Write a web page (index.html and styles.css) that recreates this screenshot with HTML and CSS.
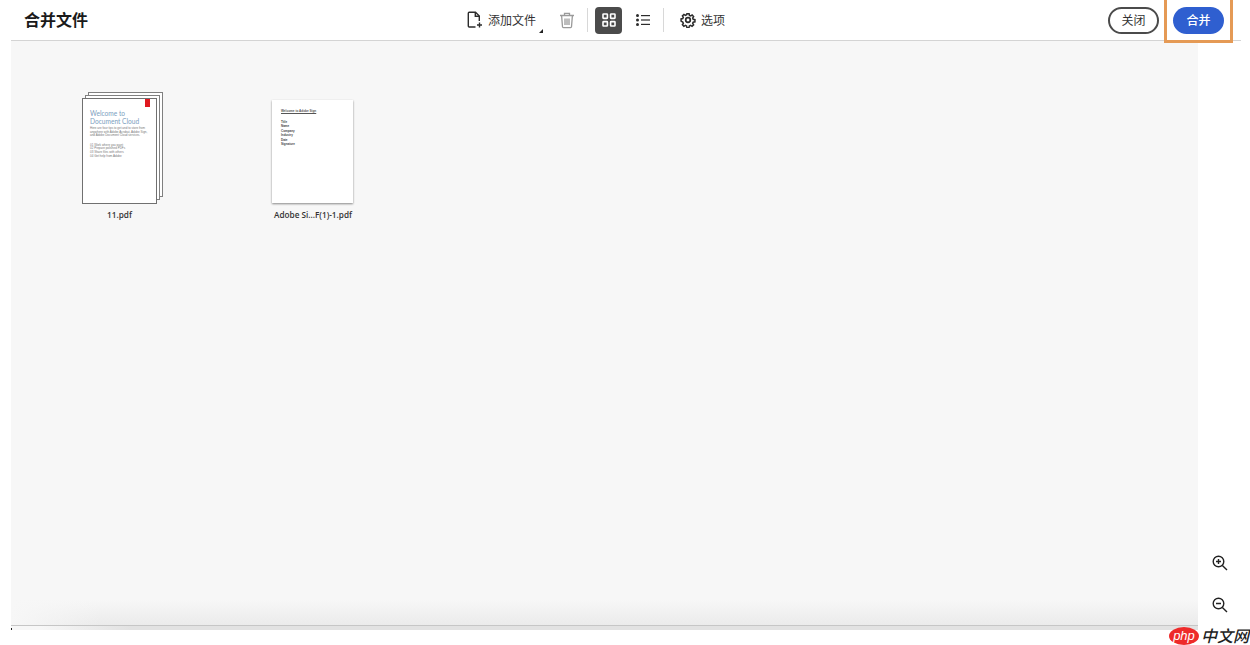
FILE: index.html
```html
<!DOCTYPE html>
<html lang="zh">
<head>
<meta charset="utf-8">
<title>合并文件</title>
<link rel="stylesheet" href="styles.css">
</head>
<body>
<div class="app">
  <header class="topbar">
    <h1 class="title">合并文件</h1>
    <div class="tools">
      <button class="tool add">
        <svg class="ic" width="18" height="18" viewBox="0 0 18 18" fill="none" stroke="#2c2c2c" stroke-width="1.4"><path d="M9.5 16H3.2a.9.9 0 0 1-.9-.9V2.2a.9.9 0 0 1 .9-.9h6.3l3.8 3.8V10"/><path d="M9.3 1.4v3.9h3.9"/><path d="M13.5 11.5v5M11 14h5"/></svg>
        <span>添加文件</span>
        <i class="corner"></i>
      </button>
      <svg class="trash" width="16" height="17" viewBox="0 0 16 17" fill="none" stroke="#9a9a9a" stroke-width="1.3"><path d="M1 3.5h14M5.5 3.3V1.4h5v1.9M2.6 3.6l.9 11.2a1 1 0 0 0 1 .9h7a1 1 0 0 0 1-.9l.9-11.2M6 6.5v6.5M8 6.5v6.5M10 6.5v6.5"/></svg>
      <i class="sep first"></i>
      <span class="view on">
        <svg width="14" height="14" viewBox="0 0 14 14" fill="none" stroke="#fff" stroke-width="1.6"><rect x="1" y="1" width="4.4" height="4.4" rx=".6"/><rect x="8.6" y="1" width="4.4" height="4.4" rx=".6"/><rect x="1" y="8.6" width="4.4" height="4.4" rx=".6"/><rect x="8.6" y="8.6" width="4.4" height="4.4" rx=".6"/></svg>
      </span>
      <span class="view">
        <svg width="14" height="12" viewBox="0 0 14 12" fill="#2c2c2c"><circle cx="1.5" cy="1.6" r="1.5"/><circle cx="1.5" cy="6" r="1.5"/><circle cx="1.5" cy="10.4" r="1.5"/><rect x="5" y="1" width="9" height="1.2"/><rect x="5" y="5.4" width="9" height="1.2"/><rect x="5" y="9.8" width="9" height="1.2"/></svg>
      </span>
      <i class="sep second"></i>
      <button class="tool opts">
        <svg class="ic" width="16" height="16" viewBox="0 0 16 16" fill="none" stroke="#2c2c2c" stroke-width="1.7"><circle cx="8" cy="8" r="2.3"/><path d="M6.8 1h2.4l.4 1.9 1.3.6 1.7-1 1.6 1.7-1 1.6.6 1.4 1.9.4v2.4l-1.9.4-.6 1.3 1 1.7-1.7 1.6-1.6-1-1.4.6-.4 1.9H6.8l-.4-1.9-1.3-.6-1.7 1-1.6-1.7 1-1.6-.6-1.4L.3 9.2V6.8l1.9-.4.6-1.3-1-1.7 1.7-1.6 1.6 1 1.4-.6z" transform="translate(.8 .8) scale(.9)"/></svg>
        <span>选项</span>
      </button>
    </div>
    <div class="actions">
      <button class="btn close">关闭</button>
      <button class="btn merge">合并</button>
    </div>
  </header>
  <div class="body">
    <main class="stage">
      <div class="files">
        <figure class="file stacked">
          <div class="thumb">
            <i class="sheet back2"></i>
            <i class="sheet back1"></i>
            <div class="page front">
              <i class="logo"></i>
              <p class="wel">Welcome to<br>Document Cloud</p>
              <p class="fine">Here are four tips to get and to store from<br>anywhere with Adobe Acrobat, Adobe Sign,<br>and Adobe Document Cloud services.</p>
              <p class="fine list">01 Work where you want<br>02 Prepare polished PDFs<br>03 Share files with others<br>04 Get help from Adobe</p>
            </div>
          </div>
          <figcaption>11.pdf</figcaption>
        </figure>
        <figure class="file second-file">
          <div class="thumb">
            <div class="page single">
              <p class="head">Welcome to Adobe Sign</p>
              <p class="fields">Title<br>Name<br>Company<br>Industry<br>Date<br>Signature</p>
            </div>
          </div>
          <figcaption>Adobe Si...F(1)-1.pdf</figcaption>
        </figure>
      </div>
      <div class="floor">
        <div class="shade"></div>
        <div class="rule"></div>
        <div class="strip"><i class="dot"></i></div>
      </div>
    </main>
    <aside class="rail">
      <svg width="16" height="16" viewBox="0 0 16 16" fill="none" stroke="#222" stroke-width="1.4"><circle cx="6.5" cy="6.5" r="5.3"/><path d="M10.4 10.4l4.6 4.6M6.5 4v5M4 6.5h5"/></svg>
      <svg width="16" height="16" viewBox="0 0 16 16" fill="none" stroke="#222" stroke-width="1.4"><circle cx="6.5" cy="6.5" r="5.3"/><path d="M10.4 10.4l4.6 4.6M4 6.5h5"/></svg>
    </aside>
  </div>
</div>
<div class="highlight"></div>
<div class="mark"><span class="php">php</span><span class="cn">中文网</span></div>
</body>
</html>
```
FILE: styles.css
```css
* { box-sizing: border-box; }
html, body { margin: 0; height: 100%; overflow: hidden; background: #fff; }
body { font-family: "Noto Sans CJK SC", "Liberation Sans", sans-serif; color: #2c2c2c; }
.app { width: 1250px; height: 645px; padding-left: 11px; display: flex; flex-direction: column; }
.topbar { height: 41px; width: 1230px; border-bottom: 1px solid #d4d4d4; display: flex; align-items: center; flex: none; position: relative; }
.title { margin: 0 0 2px 13px; font-size: 16px; font-weight: 700; color: #1a1a1a; line-height: 20px; width: 442px; }
.tools { display: flex; align-items: center; height: 40px; }
button { font: inherit; background: none; border: 0; padding: 0; color: inherit; }
.tool { display: flex; align-items: center; font-size: 12px; line-height: 16px; color: #333; position: relative; }
.add .ic { margin-right: 4px; }
.corner { position: absolute; right: -7px; bottom: -4px; border: 2px solid transparent; border-right-color: #222; border-bottom-color: #222; }
.trash { margin-left: 23px; }
.sep { width: 1px; height: 24px; background: #d8d8d8; }
.sep.first { margin-left: 12px; }
.view { width: 27px; height: 27px; border-radius: 4px; display: flex; align-items: center; justify-content: center; margin-left: 7px; }
.view.on { background: #4b4b4b; }
.sep.second { margin-left: 7px; }
.opts { margin-left: 16px; }
.opts .ic { margin-right: 5px; }
.actions { display: flex; gap: 14px; margin-left: auto; margin-right: 17px; }
.btn { width: 51px; height: 27px; border-radius: 14px; font-size: 12px; line-height: 1; display: flex; align-items: center; justify-content: center; }
.close { border: 2px solid #4b4b4b; color: #333; }
.merge { background: #2f5fd0; color: #fff; font-weight: 500; }
.body { flex: none; height: 589px; display: flex; }
.stage { width: 1187px; height: 589px; background: #f7f7f7; display: flex; flex-direction: column; }
.files { flex: 1; display: flex; padding: 51px 0 0 71px; }
.file { margin: 0; width: 82px; display: flex; flex-direction: column; align-items: center; }
.second-file { margin-left: 108px; }
.thumb { width: 82px; height: 112px; position: relative; }
.file figcaption { font-family: "Open Sans", "Liberation Sans", sans-serif; font-size: 8.2px; font-weight: 600; color: #333; margin-top: 5px; line-height: 12px; white-space: nowrap; }
.stacked figcaption { margin-right: 7px; }
.sheet { position: absolute; width: 75px; height: 105px; background: #fff; border: 1px solid #808080; }
.back2 { left: 6px; top: 0; }
.back1 { left: 3px; top: 3px; }
.page { background: #fff; overflow: hidden; }
.front { position: absolute; left: 0; top: 6px; width: 75px; height: 106px; border: 1px solid #707070; padding: 7px 5px 0 7px; }
.logo { position: absolute; right: 6px; top: 0; width: 5px; height: 8px; background: #e0181f; }
.wel { margin: 3px 0 0; font-family: Lato, sans-serif; font-weight: 400; font-size: 6.6px; line-height: 8px; color: #7da0c0; white-space: nowrap; }
.fine { margin: 2px 0 0; font-family: "Liberation Sans", sans-serif; font-size: 3px; line-height: 3.6px; color: #777; white-space: nowrap; }
.fine.list { margin-top: 6px; }
.thumb .single { width: 81px; height: 103px; margin: 8px 0 0; box-shadow: 0 1px 2px rgba(0,0,0,.45); padding: 9px 0 0 9px; }
.head { margin: 0; font-family: "Liberation Sans", sans-serif; font-size: 3.1px; font-weight: 700; text-decoration: underline; color: #555; white-space: nowrap; }
.fields { margin: 7px 0 0; font-family: "Liberation Sans", sans-serif; font-size: 3px; font-weight: 700; line-height: 4.4px; color: #444; }
.floor { height: 30px; flex: none; display: flex; flex-direction: column; }
.shade { height: 25px; background: linear-gradient(to right, #f7f7f7, rgba(247,247,247,0) 90px), linear-gradient(to bottom, #f7f7f7, #ebebeb); }
.rule { height: 1px; background: #c6c6c6; }
.strip { height: 4px; position: relative; background: linear-gradient(to right, #f7f7f7 30px, #e2e2e2 120px); }
.dot { position: absolute; left: 0; top: 2px; width: 1px; height: 2px; background: #222; }
.rail { flex: 1; display: flex; flex-direction: column; align-items: flex-start; padding: 514px 0 0 14px; gap: 26px; }
.highlight { position: absolute; left: 1164px; top: -3px; width: 69px; height: 46px; border: 3px solid #e59a55; }
.mark { position: absolute; left: 1169px; top: 626px; height: 19px; display: flex; align-items: center; }
.php { width: 30px; height: 18px; border-radius: 50%; background: #ee2a2a; color: #fff; font: italic 13px/17px "Liberation Sans", sans-serif; text-align: center; }
.cn { font-size: 16px; font-style: italic; font-weight: 500; color: #222; margin-left: 2px; line-height: 19px; white-space: nowrap; }
```
